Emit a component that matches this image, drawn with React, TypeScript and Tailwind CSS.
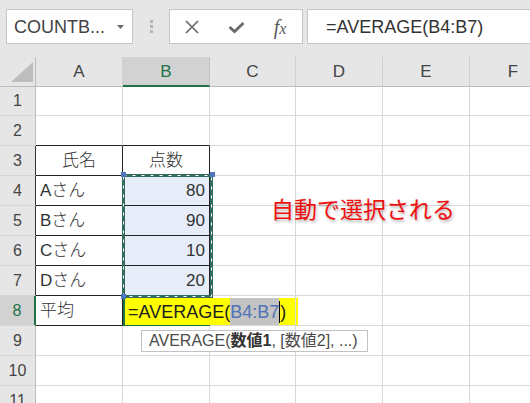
import React from "react";

const colW = ["w-[36px]", "w-[87px]", "w-[87px]", "w-[86px]", "w-[87px]", "w-[87px]", "w-[87px]"];
const letters = ["A", "B", "C", "D", "E", "F"];
const rowNums = [1, 2, 3, 4, 5, 6, 7, 8, 9, 10, 11];

function rowHeader(n: number) {
  let cls =
    "w-[36px] shrink-0 flex items-center justify-center text-[16px] border-b border-[#d6d6d6] ";
  if (n === 8) {
    cls += "bg-[#d2d2d2] text-[#217346] border-r-2 border-r-[#217346]";
  } else if (n >= 3 && n <= 7) {
    cls += "bg-[#e6e6e6] text-[#444] border-r border-r-[#333]";
  } else {
    cls += "bg-[#e6e6e6] text-[#444] border-r border-r-[#bcbcbc]";
  }
  return (
    <div key="h" className={cls}>
      <span className="leading-none">{n}</span>
    </div>
  );
}

function dataCell(n: number, c: number) {
  const w = colW[c + 1];
  const inTable = n >= 3 && n <= 8 && c <= 1;
  let cls = `${w} shrink-0 flex items-center border-r border-b relative `;
  let content: React.ReactNode = null;

  if (inTable) {
    cls += "border-[#222] ";
  } else if (n === 2 && c <= 1) {
    cls += "border-r-[#d9d9d9] border-b-[#222] ";
  } else {
    cls += "border-[#d9d9d9] ";
  }

  if (c === 0) {
    if (n === 3) {
      cls += "justify-center";
      content = "氏名";
    } else if (n >= 4 && n <= 7) {
      cls += "justify-start pl-[4px]";
      content = ["Aさん", "Bさん", "Cさん", "Dさん"][n - 4];
    } else if (n === 8) {
      cls += "justify-start pl-[4px]";
      content = "平均";
    }
  }
  if (c === 1) {
    if (n === 3) {
      cls += "justify-center";
      content = "点数";
    } else if (n >= 4 && n <= 7) {
      cls += "justify-end pr-[4px] bg-[#e6edf8]";
      content = ["80", "90", "10", "20"][n - 4];
    }
  }

  if (n === 8 && c === 1) {
    return (
      <div key={c} className="w-[87px] shrink-0 relative border-2 border-[#217346]">
        <div className="absolute left-0 top-0 w-[173px] h-[27px] bg-[#ffff00] pl-[3px] flex items-center whitespace-nowrap text-[18px] leading-none text-[#222]">
          <span>=AVERAGE(</span>
          <span className="bg-[#c3c3c3] text-[#4f72b6] h-[27px] flex items-center">B4:B7</span>
          <span className="inline-block w-[1px] h-[22px] bg-black"></span>
          <span>)</span>
        </div>
      </div>
    );
  }

  return (
    <div key={c} className={cls}>
      {content !== null && <span className="text-[17px] leading-none text-[#333] font-light">{content}</span>}
    </div>
  );
}

export default function App() {
  return (
    <div className="relative w-[530px] h-[403px] overflow-hidden bg-white font-['Liberation_Sans','Noto_Sans_CJK_JP',sans-serif] text-[#333]">
      {/* Formula bar */}
      <div className="h-[57px] bg-[#e6e6e6] flex items-start pt-[9px]">
        <div className="ml-[6px] w-[127px] h-[35px] shrink-0 bg-white border border-[#c6c6c6] flex items-center pl-[7px]">
          <span className="text-[18px] leading-none text-[#444]">COUNTB...</span>
          <svg className="ml-auto mr-[8px]" width="7" height="4" viewBox="0 0 7 4">
            <polygon points="0,0 7,0 3.5,4" fill="#6b6b6b" />
          </svg>
        </div>
        <div className="w-[36px] h-[35px] shrink-0 flex flex-col items-center justify-center gap-[2px]">
          <div className="w-[3px] h-[3px] bg-[#b4b4b4]"></div>
          <div className="w-[3px] h-[3px] bg-[#b4b4b4]"></div>
          <div className="w-[3px] h-[3px] bg-[#b4b4b4]"></div>
        </div>
        <div className="w-[134px] h-[35px] shrink-0 bg-white border border-[#c6c6c6] flex items-center">
          <div className="w-[44px] flex justify-center">
            <svg width="14" height="14" viewBox="0 0 14 14">
              <path d="M1 1 L13 13 M13 1 L1 13" stroke="#6a6a6a" strokeWidth="1.7" fill="none" />
            </svg>
          </div>
          <div className="w-[44px] flex justify-center">
            <svg width="17" height="14" viewBox="0 0 17 14">
              <path d="M1.5 7 L6.5 11.5 L15.5 3" stroke="#6a6a6a" strokeWidth="2.8" fill="none" />
            </svg>
          </div>
          <div className="w-[44px] flex justify-center">
            <span className="font-['Liberation_Serif',serif] italic text-[20px] leading-none text-[#5a5a5a]">
              f<span className="text-[16px]">x</span>
            </span>
          </div>
        </div>
        <div className="ml-[4px] w-[240px] h-[35px] shrink-0 bg-white border border-[#c6c6c6] flex items-center pl-[18px]">
          <span className="text-[18px] leading-none text-[#333]">=AVERAGE(B4:B7)</span>
        </div>
      </div>

      {/* Grid */}
      <div className="flex flex-col">
        <div className="flex h-[30px]">
          <div className="w-[36px] shrink-0 bg-[#e6e6e6] border-r border-b border-[#bcbcbc] flex items-end justify-end pr-[2px] pb-[4px]">
            <svg width="22" height="20" viewBox="0 0 22 20">
              <polygon points="22,0 22,20 0,20" fill="#bdbdbd" />
            </svg>
          </div>
          {letters.map((l, i) => (
            <div
              key={l}
              className={
                i === 1
                  ? `${colW[i + 1]} shrink-0 bg-[#d2d2d2] text-[#217346] border-r border-r-[#c4c4c4] border-b-2 border-b-[#217346] flex items-center justify-center text-[17px]`
                  : `${colW[i + 1]} shrink-0 bg-[#e6e6e6] text-[#444] border-r border-r-[#d0d0d0] border-b border-b-[#bcbcbc] flex items-center justify-center text-[17px]`
              }
            >
              <span className="leading-none">{l}</span>
            </div>
          ))}
        </div>
        {rowNums.map((n) => (
          <div key={n} className={n === 1 ? "flex h-[29px]" : "flex h-[30px]"}>
            {rowHeader(n)}
            {letters.map((_, c) => dataCell(n, c))}
          </div>
        ))}
      </div>

      {/* Range marquee */}
      <svg className="absolute left-[121px] top-[173px]" width="93" height="126" viewBox="0 0 93 126">
        <rect x="2.5" y="2.5" width="88" height="121" fill="none" stroke="#316b5c" strokeWidth="3" />
        <rect x="2.5" y="2.5" width="88" height="121" fill="none" stroke="#ffffff" strokeWidth="1" strokeDasharray="3 6" />
      </svg>
      <div className="absolute left-[121px] top-[172px] w-[5px] h-[5px] bg-[#4f76bd]"></div>
      <div className="absolute left-[210px] top-[172px] w-[5px] h-[5px] bg-[#4f76bd]"></div>
      <div className="absolute left-[121px] top-[294px] w-[5px] h-[5px] bg-[#4f76bd]"></div>

      {/* Red annotation */}
      <div className="absolute left-[271px] top-[193px] text-[23px] leading-[30px] text-[#f01010] font-['Noto_Sans_CJK_JP',sans-serif] [text-shadow:1px_2px_3px_rgba(0,0,0,0.3)] whitespace-nowrap">
        自動で選択される
      </div>

      {/* Tooltip */}
      <div className="absolute left-[141px] top-[330px] w-[227px] h-[22px] bg-white border border-[#c2c2c2] flex items-center pl-[7px] whitespace-nowrap text-[16px] leading-none text-[#4a4a4a]">
        AVERAGE(<b className="font-bold text-[#333]">数値1</b>, [数値2], ...)
      </div>
    </div>
  );
}
